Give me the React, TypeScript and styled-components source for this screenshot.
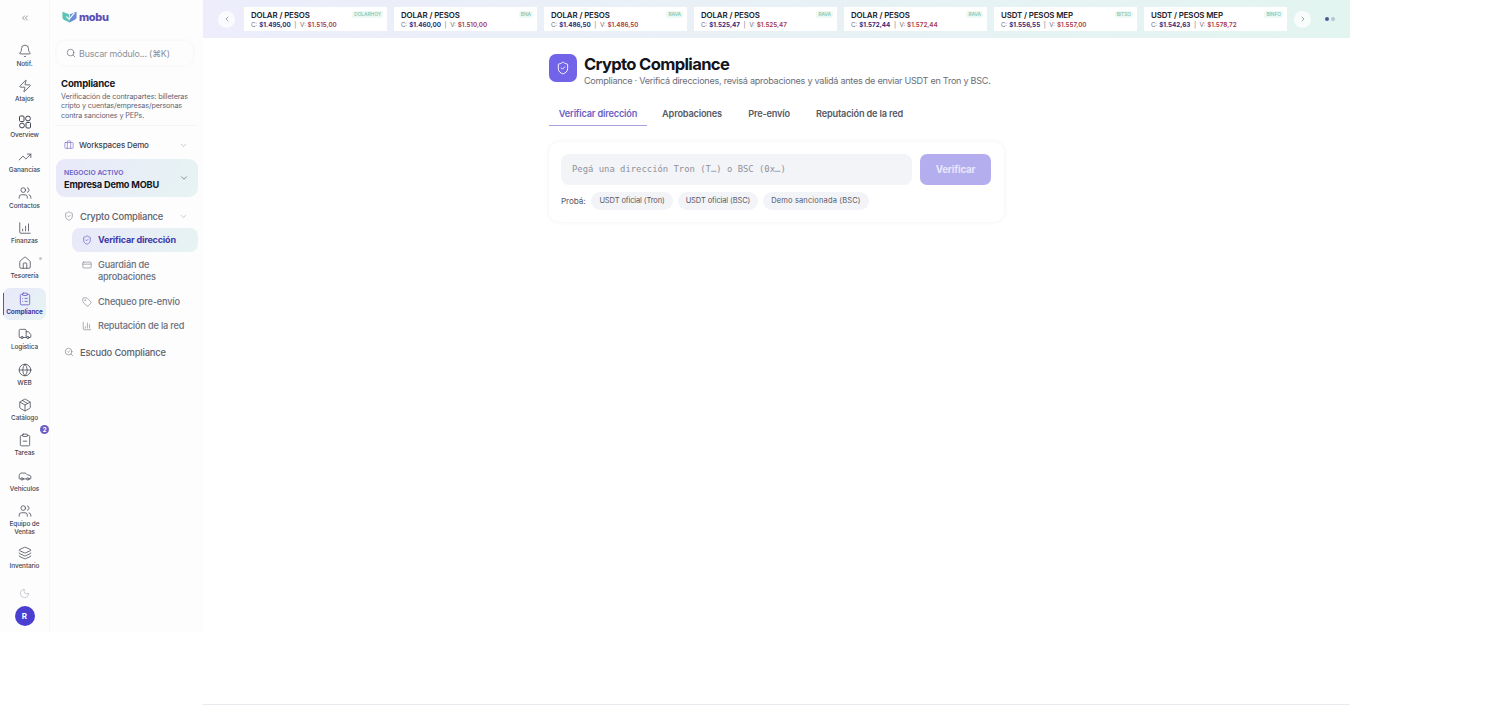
import React from "react";
import styled, { createGlobalStyle } from "styled-components";
import {
  Bell, Zap, TrendingUp, Users, ChartColumnIncreasing, House, ClipboardList, Truck, Globe, Package,
  ClipboardMinus, Car, Layers, Moon, ChevronsLeft, ChevronDown, ChevronLeft, ChevronRight, Search, Briefcase, ShieldCheck,
  CreditCard, Tag, ChartColumn, SearchCheck,
} from "lucide-react";

const Global = createGlobalStyle`
  html, body { margin: 0; padding: 0; background: #fff; }
  body { font-family: Inter, "Liberation Sans", sans-serif; color: #14141c; overflow: hidden; }
  * { box-sizing: border-box; }
`;

const Page = styled.div`
  width: 1350px;
  height: 705px;
  display: grid;
  grid-template-columns: 203px 1147px;
`;
const Side = styled.aside`
  height: 632px;
  display: flex;
  background: #fdfdfe;
`;
const Rail = styled.nav`
  width: 50px;
  flex: none;
  display: flex;
  flex-direction: column;
  align-items: center;
  padding-top: 13px;
  border-right: 1px solid #f7f7fa;
`;
const Collapse = styled.div`
  height: 30px;
  color: #5f6472;
  display: flex;
  align-items: flex-start;
  justify-content: center;
`;
const RailItem = styled.div<{ $active?: boolean; $tall?: boolean }>`
  position: relative;
  width: 43px;
  height: ${(p) => (p.$active ? 32 : p.$tall ? 42 : 35.4)}px;
  margin: ${(p) => (p.$active ? "-3px 0 6.4px" : "0")};
  display: flex;
  flex-direction: column;
  align-items: center;
  padding-top: ${(p) => (p.$active ? 4 : 1)}px;
  gap: 2px;
  font-size: 6.4px;
  line-height: 8px;
  text-align: center;
  letter-spacing: -0.01em;
  color: ${(p) => (p.$active ? "#3f37a8" : "#3f434f")};
  font-weight: ${(p) => (p.$active ? 700 : 500)};
  border-radius: 7px;
  background: ${(p) => (p.$active ? "linear-gradient(135deg,#e9e8fa,#e6f4f2)" : "transparent")};
  svg { flex: none; color: ${(p) => (p.$active ? "#5b50c8" : "#3f434f")}; }
`;
const ActiveBar = styled.i`
  position: absolute;
  left: 0;
  top: 5px;
  bottom: 5px;
  width: 1px;
  background: #5b50c8;
`;
const Badge = styled.span`
  position: absolute;
  top: -7px;
  right: -3px;
  width: 9px;
  height: 9px;
  border-radius: 50%;
  background: #6a5fc4;
  color: #fff;
  font-size: 6px;
  line-height: 9px;
  font-weight: 700;
`;
const Dot = styled.span`
  position: absolute;
  top: 2px;
  right: 4px;
  width: 3px;
  height: 3px;
  border-radius: 50%;
  background: #c4c6d2;
`;
const MoonWrap = styled.div`
  margin-top: 3px;
  height: 23px;
  color: #a9acb8;
`;
const Avatar = styled.div`
  width: 20px;
  height: 20px;
  border-radius: 50%;
  background: #4a3fd0;
  color: #fff;
  font-size: 8px;
  font-weight: 700;
  display: flex;
  align-items: center;
  justify-content: center;
`;
const Panel = styled.div`
  flex: 1;
  min-width: 0;
  padding: 0 5px 0 5px;
  display: flex;
  flex-direction: column;
`;
const Logo = styled.div`
  height: 34px;
  padding: 9px 0 0 7px;
  display: flex;
  align-items: center;
  align-self: flex-start;
  gap: 2px;
  color: #5a50b8;
  font-size: 11px;
  font-weight: 800;
  letter-spacing: -0.03em;
  span { margin-top: -9px; }
  svg { margin-top: -9px; }
`;
const SearchBox = styled.div`
  margin: 7px 5px 0 2px;
  height: 24px;
  display: flex;
  align-items: center;
  gap: 3px;
  padding-left: 9px;
  font-size: 8.9px;
  white-space: nowrap;
  letter-spacing: -0.02em;
  color: #8d909c;
  border-radius: 8px;
  box-shadow: 0 0 4px rgba(60, 60, 100, 0.05);
  svg { color: #62666f; flex: none; }
`;
const Section = styled.div`
  margin-top: 13px;
  padding: 0 6px 5px 6px;
  border-bottom: 1px solid #f5f5f8;
`;
const SecTitle = styled.div`
  font-size: 9.6px;
  line-height: 12px;
  font-weight: 700;
  letter-spacing: -0.02em;
  color: #14141c;
`;
const SecText = styled.div`
  margin-top: 2px;
  font-size: 7.2px;
  line-height: 9.4px;
  letter-spacing: -0.015em;
  color: #5f6370;
`;
const Workspace = styled.div`
  margin: 8px 1px 0 0;
  height: 22px;
  padding: 0 9px;
  display: flex;
  align-items: center;
  gap: 5px;
  font-size: 8px;
  font-weight: 500;
  letter-spacing: -0.02em;
  color: #3d404c;
  svg:first-child { color: #6a5fc4; }
  svg:last-child { color: #9b9ea9; margin-left: auto; }
`;
const Business = styled.div`
  margin: 3px 0 7px 1px;
  height: 38px;
  padding: 3px 9px 0 8px;
  border-radius: 9px;
  background: linear-gradient(120deg, #e9e8fa, #e6f4f2);
  display: flex;
  align-items: center;
  justify-content: space-between;
  svg { color: #4b4f5c; flex: none; margin-top: -3px; }
`;
const BizLabel = styled.div`
  font-size: 6.8px;
  line-height: 8px;
  font-weight: 600;
  color: #6a5fc4;
  letter-spacing: 0;
`;
const BizName = styled.div`
  margin-top: 1px;
  font-size: 9.2px;
  line-height: 13px;
  font-weight: 700;
  letter-spacing: -0.02em;
  color: #14141c;
  white-space: nowrap;
`;
const NavRow = styled.div`
  height: 24px;
  padding: 0 9px;
  margin-right: 1px;
  display: flex;
  align-items: center;
  gap: 6px;
  font-size: 9.4px;
  color: #5c606c;
  font-weight: 500;
  letter-spacing: -0.02em;
  white-space: nowrap;
  svg:first-child { color: #7a7e8a; }
  svg:last-child:not(:first-child) { color: #9b9ea9; margin-left: auto; }
`;
const SubList = styled.div`
  margin: 0 0 1px 17px;
  display: flex;
  flex-direction: column;
`;
const SubItem = styled.div<{ $active?: boolean; $h: number }>`
  height: ${(p) => p.$h}px;
  padding: ${(p) => (p.$h > 30 ? 7 : 0)}px 4px 0 10px;
  display: flex;
  align-items: ${(p) => (p.$h > 30 ? "flex-start" : "center")};
  gap: 6px;
  font-size: ${(p) => (p.$active ? 9 : 9.2)}px;
  line-height: 12px;
  letter-spacing: -0.02em;
  white-space: nowrap;
  font-weight: ${(p) => (p.$active ? 700 : 500)};
  color: ${(p) => (p.$active ? "#3f37a8" : "#6a6e7a")};
  border-radius: 8px;
  background: ${(p) => (p.$active ? "linear-gradient(120deg,#e9e8fa,#e6f4f2)" : "transparent")};
  svg { flex: none; margin-top: ${(p) => (p.$h > 30 ? 1 : 0)}px; color: ${(p) => (p.$active ? "#5b50c8" : "#7a7e8a")}; }
`;
const Main = styled.main`
  display: flex;
  flex-direction: column;
  border-bottom: 1px solid #e9e9ef;
  height: 705px;
`;
const Ticker = styled.div`
  height: 38px;
  flex: none;
  background: linear-gradient(90deg, #ededfb, #e3f5f0);
  display: flex;
  align-items: center;
  padding-left: 15px;
`;
const Round = styled.div`
  width: 17px;
  height: 17px;
  flex: none;
  border-radius: 50%;
  background: rgba(255, 255, 255, 0.75);
  color: #7a7e8a;
  display: flex;
  align-items: center;
  justify-content: center;
`;
const Cards = styled.div`
  display: flex;
  gap: 7px;
  margin: 0 7px 0 9px;
`;
const QuoteCard = styled.div`
  width: 143px;
  height: 24px;
  background: #fff;
  padding: 4px 7px 0;
  display: flex;
  flex-direction: column;
  position: relative;
`;
const Pair = styled.div`
  font-size: 7.9px;
  line-height: 9px;
  font-weight: 600;
  letter-spacing: -0.015em;
  color: #20212b;
`;
const Prices = styled.div`
  margin-top: 1px;
  font-size: 6.3px;
  line-height: 8px;
  color: #6c707c;
  white-space: nowrap;
`;
const Buy = styled.b`
  color: #2d2a80;
  font-weight: 700;
`;
const Sell = styled.b`
  color: #a83a48;
  font-weight: 600;
`;
const Source = styled.span`
  position: absolute;
  top: 4px;
  right: 4px;
  padding: 0 2px;
  font-size: 4.8px;
  line-height: 7px;
  font-weight: 500;
  color: #7cc4ae;
  background: #edf9f5;
  border-radius: 2px;
`;
const Dots = styled.div`
  display: flex;
  gap: 2px;
  margin-left: 14px;
`;
const Pip = styled.span<{ $on?: boolean }>`
  width: 4px;
  height: 4px;
  border-radius: 50%;
  background: ${(p) => (p.$on ? "#4a5a9a" : "#b9c4cc")};
`;
const Content = styled.div`
  width: 455px;
  margin: 16px auto 0;
  display: flex;
  flex-direction: column;
`;
const Head = styled.div`
  display: flex;
  gap: 7px;
`;
const HeadIcon = styled.div`
  width: 28px;
  height: 28px;
  flex: none;
  border-radius: 7px;
  background: #7264e8;
  color: #fff;
  display: flex;
  align-items: center;
  justify-content: center;
`;
const H1 = styled.h1`
  margin: 0;
  font-size: 16.6px;
  line-height: 20px;
  font-weight: 700;
  letter-spacing: -0.04em;
  color: #14141c;
`;
const Sub = styled.p`
  margin: 1px 0 -1px;
  font-size: 9.1px;
  line-height: 12px;
  letter-spacing: -0.03em;
  color: #6a6e7a;
  white-space: nowrap;
`;
const Tabs = styled.div`
  margin-top: 16px;
  display: flex;
  gap: 5px;
  height: 24px;
`;
const Tab = styled.div<{ $active?: boolean; $w: number }>`
  width: ${(p) => p.$w}px;
  text-align: center;
  font-size: 9.2px;
  line-height: 23px;
  font-weight: 600;
  letter-spacing: -0.02em;
  white-space: nowrap;
  color: ${(p) => (p.$active ? "#6a5fc4" : "#565a66")};
  border-bottom: ${(p) => (p.$active ? "1px solid #a79fe0" : "1px solid transparent")};
`;
const Card = styled.section`
  margin-top: 16px;
  height: 80px;
  border-radius: 10px;
  padding: 12px 13px 0 12px;
  box-shadow: 0 0 4px rgba(60, 60, 100, 0.08);
`;
const Row = styled.div`
  display: flex;
  gap: 8px;
`;
const Input = styled.div`
  flex: 1;
  height: 31px;
  padding-left: 11px;
  border-radius: 8px;
  background: #f3f4f7;
  font-family: "DejaVu Sans Mono", "Liberation Mono", monospace;
  font-size: 8.9px;
  line-height: 31px;
  color: #8f929d;
`;
const Verify = styled.div`
  width: 71px;
  height: 31px;
  border-radius: 7px;
  background: #b5aeee;
  color: #e8e6fb;
  font-size: 9.8px;
  font-weight: 700;
  letter-spacing: -0.02em;
  line-height: 31px;
  text-align: center;
`;
const Try = styled.div`
  margin-top: 7px;
  display: flex;
  align-items: center;
  gap: 5px;
  font-size: 8.2px;
  letter-spacing: -0.015em;
  color: #55596a;
`;
const Chip = styled.div<{ $loose?: boolean }>`
  height: 18px;
  padding: 0 8px;
  border-radius: 9px;
  background: #f3f4f7;
  font-size: 7.5px;
  letter-spacing: ${(p) => (p.$loose ? "0.02em" : "-0.015em")};
  line-height: 18px;
  white-space: nowrap;
`;
const Probe = styled.span`
  margin-right: 1px;
`;

const OverviewIcon = () => (
  <svg width="14" height="14" viewBox="0 0 14 14" fill="none" stroke="currentColor" strokeWidth="1" aria-hidden="true">
    <rect x="1.5" y="1" width="4.5" height="5.5" rx="1" />
    <circle cx="10" cy="3.5" r="2.4" />
    <circle cx="4" cy="10.5" r="2.4" />
    <rect x="8" y="7.5" width="4.5" height="5.5" rx="1" />
  </svg>
);

const rail = [
  { I: Bell, t: "Notif." },
  { I: Zap, t: "Atajos" },
  { I: OverviewIcon, t: "Overview" },
  { I: TrendingUp, t: "Ganancias" },
  { I: Users, t: "Contactos" },
  { I: ChartColumnIncreasing, t: "Finanzas" },
  { I: House, t: "Tesorería", dot: true },
  { I: ClipboardList, t: "Compliance", active: true },
  { I: Truck, t: "Logística" },
  { I: Globe, t: "WEB" },
  { I: Package, t: "Catálogo" },
  { I: ClipboardMinus, t: "Tareas", badge: "2" },
  { I: Car, t: "Vehículos" },
  { I: Users, t: "Equipo de Ventas", tall: true },
  { I: Layers, t: "Inventario" },
];

const quotes = [
  ["DOLAR / PESOS", "DOLARHOY", "$1.495,00", "$1.515,00"],
  ["DOLAR / PESOS", "BNA", "$1.460,00", "$1.510,00"],
  ["DOLAR / PESOS", "RAVA", "$1.486,50", "$1.486,50"],
  ["DOLAR / PESOS", "RAVA", "$1.525,47", "$1.525,47"],
  ["DOLAR / PESOS", "RAVA", "$1.572,44", "$1.572,44"],
  ["USDT / PESOS MEP", "BITSO", "$1.556,55", "$1.557,00"],
  ["USDT / PESOS MEP", "BINFO", "$1.542,63", "$1.578,72"],
];

const LogoMark = () => (
  <svg width="15" height="14" viewBox="0 0 17 15" aria-hidden="true">
    <path d="M0.5 1.5 L8 4.5 V13.5 L2.5 11 Q0.5 10 0.5 8 Z" fill="#5cc4b4" />
    <path d="M16.5 1.5 L9 4.5 L8 14 L14 11 Q16 10 16.5 8 Z" fill="#6a8fd8" />
    <path d="M5 7 L8 10 L14 3" stroke="#fff" strokeWidth="1.4" fill="none" />
  </svg>
);

export default function App() {
  return (
    <Page>
      <Global />
      <Side>
        <Rail>
          <Collapse><ChevronsLeft size={10} strokeWidth={1.6} /></Collapse>
          {rail.map(({ I, t, active, tall, badge, dot }: any) => (
            <RailItem key={t} $active={active} $tall={tall}>
              {active && <ActiveBar />}
              <I size={14} strokeWidth={1.3} />
              <span>{t}</span>
              {badge && <Badge>{badge}</Badge>}
              {dot && <Dot />}
            </RailItem>
          ))}
          <MoonWrap><Moon size={11} strokeWidth={1.3} /></MoonWrap>
          <Avatar>R</Avatar>
        </Rail>
        <Panel>
          <Logo><LogoMark /><span>mobu</span></Logo>
          <SearchBox><Search size={10} strokeWidth={1.6} /> Buscar módulo... (⌘K)</SearchBox>
          <Section>
            <SecTitle>Compliance</SecTitle>
            <SecText>Verificación de contrapartes: billeteras cripto y cuentas/empresas/personas contra sanciones y PEPs.</SecText>
          </Section>
          <Workspace><Briefcase size={10} strokeWidth={1.4} /> Workspaces Demo <ChevronDown size={9} strokeWidth={1.5} /></Workspace>
          <Business>
            <div>
              <BizLabel>NEGOCIO ACTIVO</BizLabel>
              <BizName>Empresa Demo MOBU</BizName>
            </div>
            <ChevronDown size={10} strokeWidth={1.5} />
          </Business>
          <NavRow><ShieldCheck size={10} strokeWidth={1.5} /> Crypto Compliance <ChevronDown size={9} strokeWidth={1.5} /></NavRow>
          <SubList>
            <SubItem $active $h={24}><ShieldCheck size={10} strokeWidth={1.5} /> Verificar dirección</SubItem>
            <SubItem $h={38}><CreditCard size={10} strokeWidth={1.5} /> <span>Guardián de<br />aprobaciones</span></SubItem>
            <SubItem $h={23}><Tag size={10} strokeWidth={1.5} /> Chequeo pre-envío</SubItem>
            <SubItem $h={26}><ChartColumn size={10} strokeWidth={1.5} /> Reputación de la red</SubItem>
          </SubList>
          <NavRow><SearchCheck size={10} strokeWidth={1.5} /> Escudo Compliance</NavRow>
        </Panel>
      </Side>
      <Main>
        <Ticker>
          <Round><ChevronLeft size={8} /></Round>
          <Cards>
            {quotes.map((q, i) => (
              <QuoteCard key={i}>
                <Pair>{q[0]}</Pair>
                <Prices>C: <Buy>{q[2]}</Buy> &nbsp;|&nbsp; V: <Sell>{q[3]}</Sell></Prices>
                <Source>{q[1]}</Source>
              </QuoteCard>
            ))}
          </Cards>
          <Round><ChevronRight size={8} /></Round>
          <Dots><Pip $on /><Pip /></Dots>
        </Ticker>
        <Content>
          <Head>
            <HeadIcon><ShieldCheck size={14} strokeWidth={1.6} /></HeadIcon>
            <div>
              <H1>Crypto Compliance</H1>
              <Sub>Compliance · Verificá direcciones, revisá aprobaciones y validá antes de enviar USDT en Tron y BSC.</Sub>
            </div>
          </Head>
          <Tabs>
            <Tab $active $w={98}>Verificar dirección</Tab>
            <Tab $w={80}>Aprobaciones</Tab>
            <Tab $w={64}>Pre-envío</Tab>
            <Tab $w={107}>Reputación de la red</Tab>
          </Tabs>
          <Card>
            <Row>
              <Input>Pegá una dirección Tron (T…) o BSC (0x…)</Input>
              <Verify>Verificar</Verify>
            </Row>
            <Try>
              <Probe>Probá:</Probe>
              <Chip>USDT oficial (Tron)</Chip>
              <Chip>USDT oficial (BSC)</Chip>
              <Chip $loose>Demo sancionada (BSC)</Chip>
            </Try>
          </Card>
        </Content>
      </Main>
    </Page>
  );
}
